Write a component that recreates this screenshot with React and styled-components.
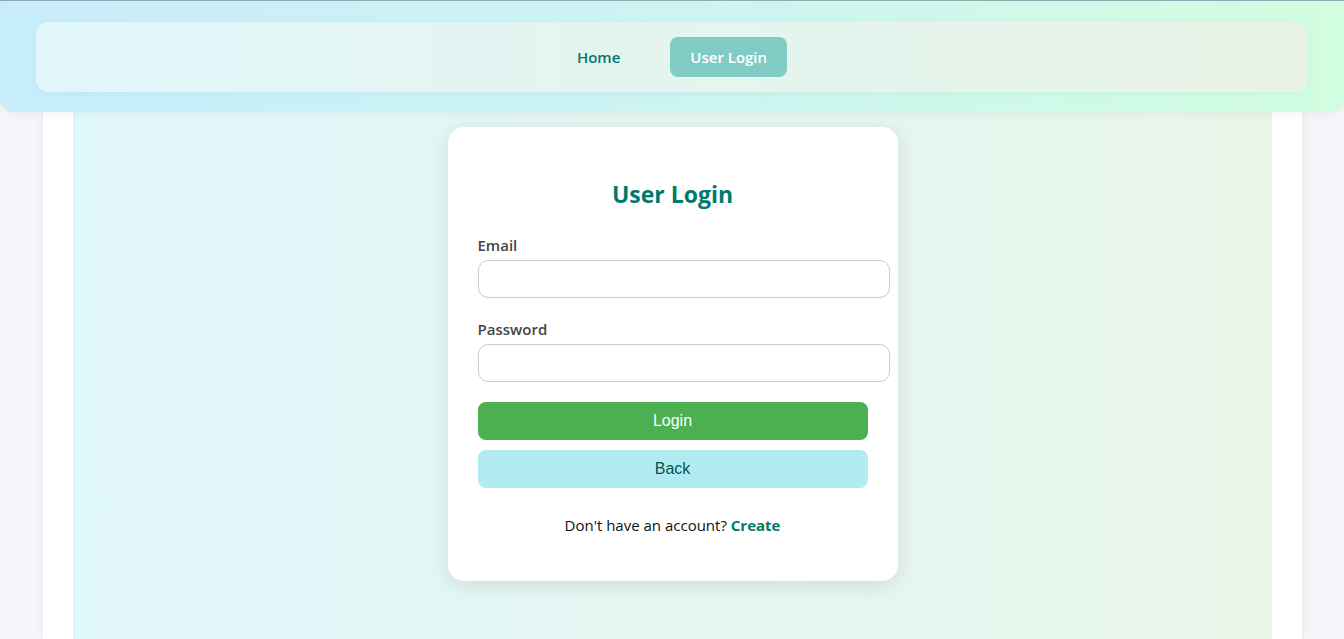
import React from 'react';
import styled, {createGlobalStyle} from 'styled-components';

const GlobalStyle = createGlobalStyle`
  * { box-sizing: border-box; }
  html, body {
    margin: 0;
    padding: 0;
    background: #f4f5f9;
    font-family: "Open Sans", "Noto Sans", sans-serif;
  }
`;

const Page = styled.div`
  display: flex;
  flex-direction: column;
  overflow: hidden;
  height: 639px;
`;

const Header = styled.header`
  position: relative;
  z-index: 2;
  height: 112px;
  padding: 21px 36px 21px;
  border-top: 1px solid #93aab2;
  border-radius: 0 0 14px 14px;
  background: linear-gradient(90deg, #c7edfc 0%, #cdf5f1 55%, #d1fde0 100%);
  box-shadow: 0 2px 6px rgba(0, 0, 0, 0.05);
`;

const Nav = styled.nav`
  height: 70px;
  display: flex;
  align-items: center;
  justify-content: center;
  gap: 30px;
  border-radius: 12px;
  background: linear-gradient(90deg, #e0f6f9, #e8f3e6);
  box-shadow: 0 2px 8px rgba(0, 0, 0, 0.04);
`;

const NavLink = styled.a`
  padding: 10px 20px;
  border-radius: 8px;
  font-size: 15px;
  font-weight: 600;
  line-height: 20px;
  text-decoration: none;
  cursor: pointer;
  color: ${p => (p.$active ? '#ffffff' : '#00796b')};
  background: ${p => (p.$active ? '#80cbc4' : 'transparent')};
`;

const Container = styled.main`
  flex: 1;
  width: 1259px;
  margin: -3px auto 0;
  padding: 0 30px;
  background: #ffffff;
  box-shadow: 0 0 8px rgba(0, 0, 0, 0.06);
`;

const Panel = styled.section`
  height: 100%;
  padding: 18px 0 0 1px;
  display: flex;
  justify-content: center;
  align-items: flex-start;
  background: linear-gradient(90deg, #e0f7fa, #e8f5e9);
`;

const Card = styled.div`
  width: 450px;
  padding: 30px;
  background: #ffffff;
  border-radius: 16px;
  box-shadow: 0 4px 20px rgba(0, 0, 0, 0.1);
`;

const Title = styled.h2`
  margin: 21px 0 25px;
  text-align: center;
  font-size: 23px;
  line-height: 32px;
  font-weight: 700;
  color: #00796b;
`;

const Field = styled.div`
  margin-bottom: ${p => (p.$last ? '20px' : '21px')};
`;

const Label = styled.label`
  display: block;
  margin-bottom: 5px;
  font-size: 15px;
  line-height: 20px;
  font-weight: 600;
  color: #444444;
`;

const Input = styled.input`
  display: block;
  width: calc(100% + 22px);
  height: 38px;
  padding: 10px;
  border: 1px solid #cccccc;
  border-radius: 10px;
  font-size: 14px;
  outline: none;
`;

const Button = styled.button`
  display: block;
  width: 100%;
  height: 38px;
  margin-top: ${p => (p.$gap ? '10px' : '0')};
  border: none;
  border-radius: 8px;
  font-family: "Liberation Sans", Arial, sans-serif;
  font-size: 16px;
  cursor: pointer;
  color: ${p => (p.$secondary ? '#00564f' : '#ffffff')};
  background: ${p => (p.$secondary ? '#b2ebf2' : '#4caf50')};
`;

const Footer = styled.p`
  margin: 27px 0 16px;
  text-align: center;
  font-size: 15px;
  line-height: 20px;
  color: #111111;
`;

const Create = styled.a`
  color: #00796b;
  font-weight: 700;
  text-decoration: none;
  cursor: pointer;
`;

export default function App() {
    return (
        <>
            <GlobalStyle/>
            <Page>
                <Header>
                    <Nav>
                        <NavLink>Home</NavLink>
                        <NavLink $active>User Login</NavLink>
                    </Nav>
                </Header>
                <Container>
                    <Panel>
                        <Card>
                            <Title>User Login</Title>
                            <Field>
                                <Label>Email</Label>
                                <Input type="email"/>
                            </Field>
                            <Field $last>
                                <Label>Password</Label>
                                <Input type="password"/>
                            </Field>
                            <Button>Login</Button>
                            <Button $secondary $gap>Back</Button>
                            <Footer>
                                Don't have an account? <Create>Create</Create>
                            </Footer>
                        </Card>
                    </Panel>
                </Container>
            </Page>
        </>
    );
}
